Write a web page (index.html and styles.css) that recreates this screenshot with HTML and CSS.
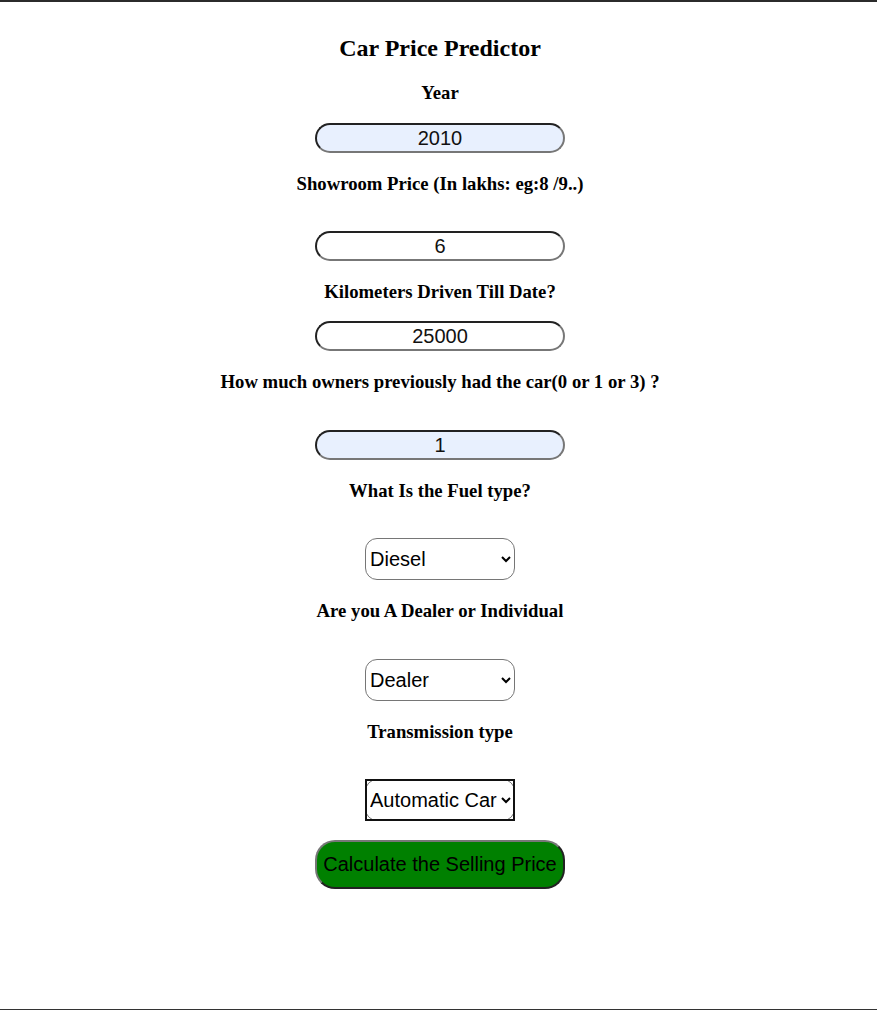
FILE: index.html
```html
<!DOCTYPE html>
<html lang="en">
<head>
<meta charset="utf-8">
<title>Car Price Predictor</title>
<link rel="stylesheet" href="styles.css">
</head>
<body>
<div class="page">
  <form class="form">
    <h2 class="title">Car Price Predictor</h2>

    <label class="label">Year</label>
    <input class="field autofill" type="text" value="2010">

    <label class="label">Showroom Price (In lakhs: eg:8 /9..)</label>
    <input class="field far" type="text" value="6">

    <label class="label">Kilometers Driven Till Date?</label>
    <input class="field near" type="text" value="25000">

    <label class="label">How much owners previously had the car(0 or 1 or 3) ?</label>
    <input class="field farther autofill" type="text" value="1">

    <label class="label">What Is the Fuel type?</label>
    <select class="choice far">
      <option>Diesel</option>
      <option>Petrol</option>
      <option>CNG</option>
    </select>

    <label class="label">Are you A Dealer or Individual</label>
    <select class="choice farther">
      <option>Dealer</option>
      <option>Individual</option>
    </select>

    <label class="label">Transmission type</label>
    <span class="focus-wrap far">
      <select class="choice">
        <option>Automatic Car</option>
        <option>Manual Car</option>
      </select>
    </span>

    <button class="submit" type="button">Calculate the Selling Price</button>
  </form>
</div>
</body>
</html>
```

FILE: styles.css
```css
html, body {
  margin: 0;
  padding: 0;
  background: #ffffff;
}

.page {
  box-sizing: border-box;
  min-height: 100vh;
  border-top: 2px solid #2b2b2b;
  border-bottom: 1px solid #333333;
  padding-left: 3px;
}

.form {
  display: flex;
  flex-direction: column;
  align-items: center;
  margin: 0;
  padding-top: 32px;
  font-family: "Liberation Serif", "Times New Roman", serif;
  color: #000;
}

.title {
  margin: 0;
  font-size: 24px;
  line-height: 28px;
  font-weight: bold;
}

.label {
  display: block;
  margin-top: 20px;
  font-size: 18.72px;
  line-height: 21px;
  font-weight: bold;
  text-align: center;
}

.field {
  box-sizing: border-box;
  width: 250px;
  height: 30px;
  margin: 20px 0 0;
  padding: 0 6px;
  border-width: 2px;
  border-style: solid;
  border-top-color: #222222;
  border-left-color: #222222;
  border-bottom-color: #777777;
  border-right-color: #777777;
  border-radius: 15px;
  background: #ffffff;
  font-family: "Liberation Sans", Arial, sans-serif;
  font-size: 20px;
  color: #111;
  text-align: center;
  outline: none;
}

.field.autofill {
  background: #e8f0fe;
}

.field.near {
  margin-top: 19px;
}

.far {
  margin-top: 37px;
}

.farther {
  margin-top: 38px;
}

.field.far {
  margin-top: 37px;
}

.field.farther {
  margin-top: 38px;
}

.choice {
  box-sizing: border-box;
  width: 150px;
  height: 42px;
  padding: 0;
  border: 1px solid #767676;
  border-radius: 12px;
  background: #ffffff;
  font-family: "Liberation Sans", Arial, sans-serif;
  font-size: 20px;
  color: #000;
  outline: none;
}

.focus-wrap {
  position: relative;
  display: block;
  line-height: 0;
}

.focus-wrap::after {
  content: "";
  position: absolute;
  inset: 0;
  border: 2px solid #111111;
  pointer-events: none;
}

.submit {
  box-sizing: border-box;
  width: 250px;
  height: 49px;
  margin-top: 19px;
  padding: 0;
  border-width: 2px;
  border-style: solid;
  border-top-color: #777777;
  border-left-color: #777777;
  border-bottom-color: #222222;
  border-right-color: #222222;
  border-radius: 20px;
  background: #008000;
  font-family: "Liberation Sans", Arial, sans-serif;
  font-size: 20px;
  color: #000;
  cursor: pointer;
}
```
